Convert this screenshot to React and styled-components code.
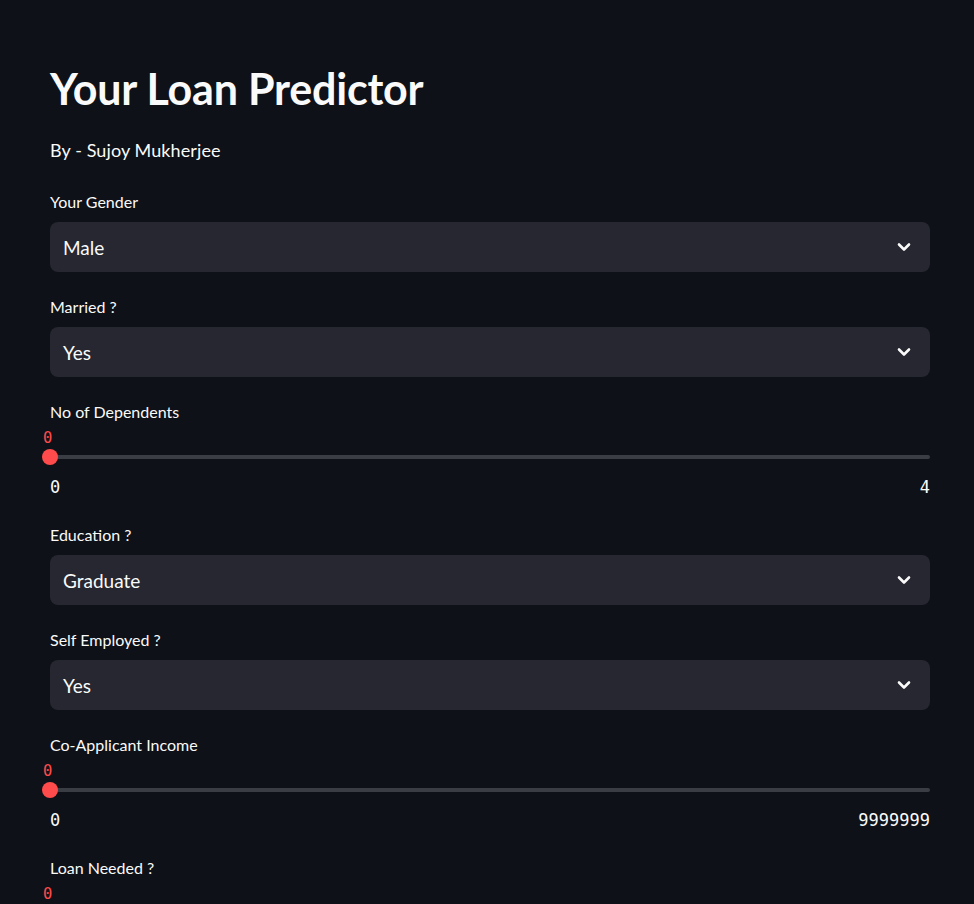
import styled, { createGlobalStyle } from "styled-components";

const GlobalStyle = createGlobalStyle`
  html, body {
    margin: 0;
    padding: 0;
    background: #0e1117;
  }
  body {
    font-family: Lato, "Noto Sans", sans-serif;
    color: #fafafa;
    overflow: hidden;
  }
`;

const Page = styled.main`
  width: 880px;
  padding: 61px 0 0 50px;
  display: flex;
  flex-direction: column;
`;

const Title = styled.h1`
  margin: 0;
  font-size: 43px;
  line-height: 56px;
  font-weight: 700;
  letter-spacing: -0.2px;
`;

const Byline = styled.p`
  margin: 20px 0 0;
  font-size: 18px;
  line-height: 26px;
  letter-spacing: 0.1px;
`;

const Field = styled.section`
  display: flex;
  flex-direction: column;
  margin-top: ${(p) => p.gap ?? "24px"};
`;

const Label = styled.label`
  font-size: 16px;
  line-height: 22px;
  margin-bottom: 9px;
`;

const Select = styled.div`
  height: 50px;
  border-radius: 8px;
  background: #262730;
  display: flex;
  align-items: center;
  justify-content: space-between;
  padding: 0 19px 0 13px;
  font-size: 19px;
`;

const Chevron = () => (
  <svg width="14" height="10" viewBox="0 0 14 10" fill="none">
    <path d="M2 2.5l5 5 5-5" stroke="#fafafa" strokeWidth="2.6" strokeLinecap="round" strokeLinejoin="round" />
  </svg>
);

const Mono = styled.span`
  font-family: "DejaVu Sans Mono", "Liberation Mono", monospace;
`;

const ThumbValue = styled(Mono)`
  color: #ff4b4b;
  font-size: 15.5px;
  line-height: 16px;
  margin: -2px 0 3px -7px;
`;

const TrackWrap = styled.div`
  position: relative;
  height: 16px;
  display: flex;
  align-items: center;
`;

const Track = styled.div`
  width: 100%;
  height: 4px;
  border-radius: 2px;
  background: #3b3d45;
`;

const Thumb = styled.div`
  position: absolute;
  left: -8px;
  top: 0;
  width: 16px;
  height: 16px;
  border-radius: 50%;
  background: #ff4b4b;
`;

const Ticks = styled.div`
  display: flex;
  justify-content: space-between;
  margin-top: 12px;
  font-size: 17px;
  line-height: 20px;
`;

function SelectField({ label, value, gap }) {
  return (
    <Field gap={gap}>
      <Label>{label}</Label>
      <Select>
        <span>{value}</span>
        <Chevron />
      </Select>
    </Field>
  );
}

function SliderField({ label, min, max, gap, partial }) {
  return (
    <Field gap={gap}>
      <Label>{label}</Label>
      <ThumbValue>{min}</ThumbValue>
      {!partial && (
        <>
          <TrackWrap>
            <Track />
            <Thumb />
          </TrackWrap>
          <Ticks>
            <Mono>{min}</Mono>
            <Mono>{max}</Mono>
          </Ticks>
        </>
      )}
    </Field>
  );
}

export default function App() {
  return (
    <>
      <GlobalStyle />
      <Page>
        <Title>Your Loan Predictor</Title>
        <Byline>By - Sujoy Mukherjee</Byline>
        <SelectField label="Your Gender" value="Male" gap="28px" />
        <SelectField label="Married ?" value="Yes" />
        <SliderField label="No of Dependents" min="0" max="4" />
        <SelectField label="Education ?" value="Graduate" gap="27px" />
        <SelectField label="Self Employed ?" value="Yes" />
        <SliderField label="Co-Applicant Income" min="0" max="9999999" />
        <SliderField label="Loan Needed ?" min="0" gap="27px" partial />
      </Page>
    </>
  );
}
